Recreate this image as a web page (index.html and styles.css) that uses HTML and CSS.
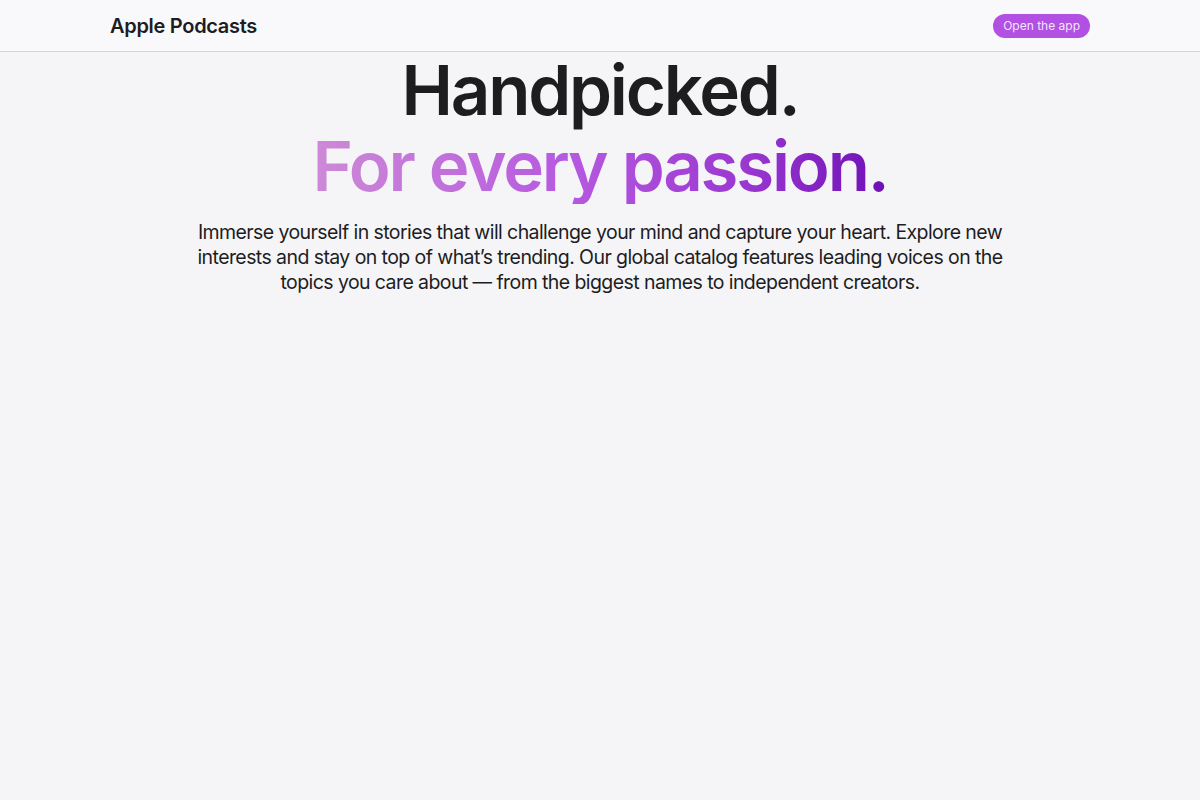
FILE: index.html
```html
<!DOCTYPE html>
<html lang="en">
<head>
<meta charset="utf-8">
<title>Apple Podcasts</title>
<link rel="stylesheet" href="styles.css">
</head>
<body>
<header class="topbar">
  <div class="topbar-inner">
    <div class="brand">Apple Podcasts</div>
    <a class="open-btn" href="#">Open the app</a>
  </div>
</header>
<main class="hero">
  <h1 class="hero-title">
    <span class="line-dark">Handpicked.</span>
    <span class="line-grad">For every passion.</span>
  </h1>
  <p class="hero-text">Immerse yourself in stories that will challenge your mind and capture your heart. Explore new interests and stay on top of what’s trending. Our global catalog features leading voices on the topics you care about — from the biggest names to independent creators.</p>
</main>
</body>
</html>
```
FILE: styles.css
```css
* { box-sizing: border-box; }
html, body { margin: 0; padding: 0; }
body {
  background: #f5f5f7;
  color: #1d1d1f;
  font-family: Inter, "Noto Sans", sans-serif;
  height: 800px;
}
.topbar {
  background: #f9f9fb;
  border-bottom: 1px solid #d2d2d7;
  height: 52px;
}
.topbar-inner {
  width: 980px;
  margin: 0 auto;
  height: 51px;
  display: flex;
  align-items: center;
  justify-content: space-between;
}
.brand {
  font-size: 20px;
  font-weight: 600;
  letter-spacing: -0.3px;
  color: #1d1d1f;
}
.open-btn {
  background: #b150e2;
  color: #f2e6fa;
  text-decoration: none;
  font-size: 12px;
  padding: 4px 10px;
  border-radius: 12px;
  line-height: 16px;
}
.hero {
  text-align: center;
}
.hero-title {
  margin: 0;
  font-size: 69px;
  line-height: 76px;
  font-weight: 600;
  letter-spacing: -2.2px;
}
.hero-title span { display: block; }
.line-dark { color: #1d1d1f; }
.line-grad {
  display: inline-block !important;
  background: linear-gradient(90deg, #cd8ad6 0%, #b658e0 45%, #9a38d0 75%, #6e10b6 100%);
  -webkit-background-clip: text;
  background-clip: text;
  color: transparent;
}
.hero-text {
  width: 830px;
  margin: 16px auto 0;
  font-size: 19.5px;
  line-height: 25px;
  letter-spacing: -0.58px;
  color: #1d1d1f;
}
```
